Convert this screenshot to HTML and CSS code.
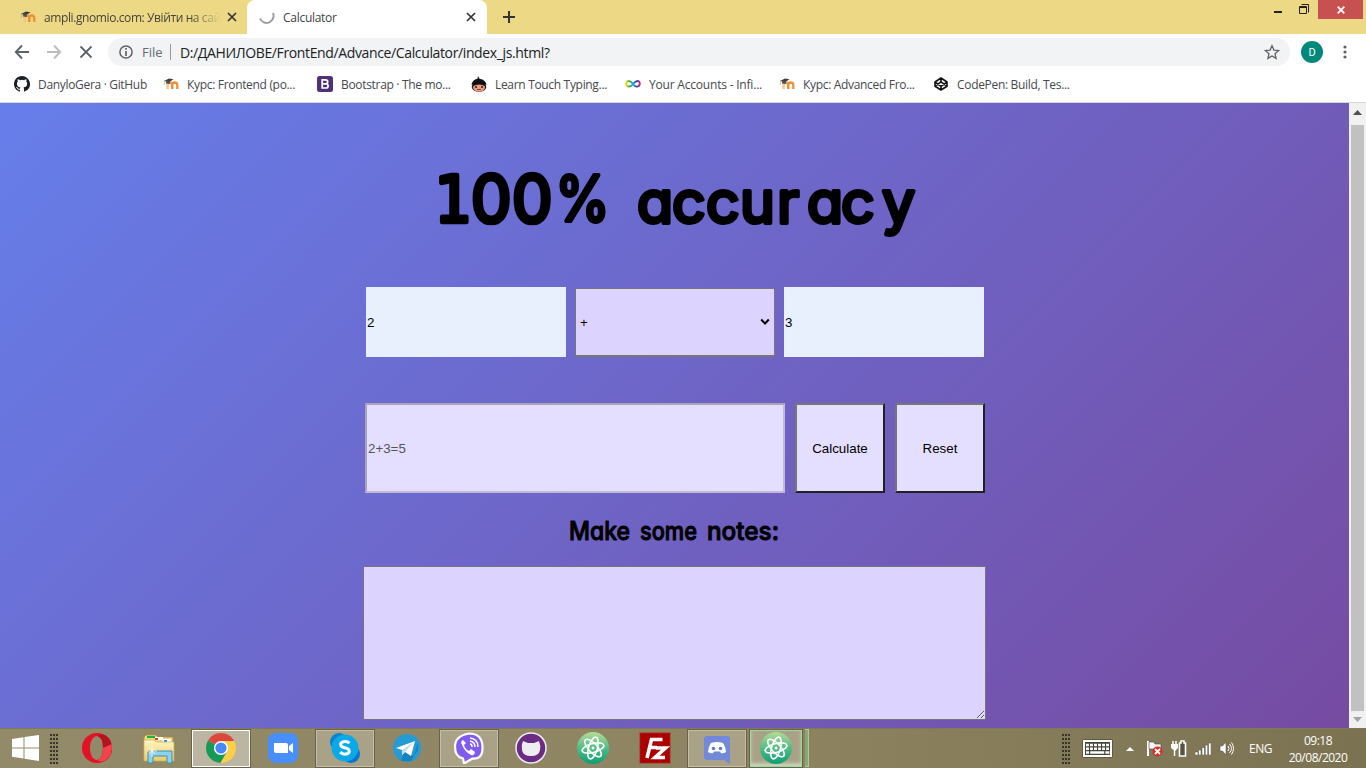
FILE: index.html
```html
<!DOCTYPE html>
<html lang="en">
<head>
<meta charset="utf-8">
<title>Calculator</title>
<link rel="stylesheet" href="styles.css">
</head>
<body>
<svg class="defs" width="0" height="0">
  <defs>
    <linearGradient id="atomg" x2="0" y2="1"><stop stop-color="#b5dc98"/><stop offset=".5" stop-color="#52bd83"/><stop offset="1" stop-color="#0c9e76"/></linearGradient>
    <linearGradient id="orangeg" x2="1" y2="0"><stop stop-color="#f9c28a"/><stop offset=".5" stop-color="#ed8b25"/><stop offset="1" stop-color="#f0913a"/></linearGradient>
    <linearGradient id="folder" x2="0" y2="1"><stop stop-color="#fff6c4"/><stop offset="1" stop-color="#e9cb69"/></linearGradient>
    <linearGradient id="rainbow" x2="1" y2="0"><stop stop-color="#e8d800"/><stop offset=".25" stop-color="#3aa650"/><stop offset=".5" stop-color="#15a9e0"/><stop offset=".75" stop-color="#244da0"/><stop offset="1" stop-color="#d0208a"/></linearGradient>
  </defs>
  <symbol id="moodle" viewBox="0 0 16 16">
    <path d="M4.500 13V9Q4.500 6.500 6.800 6.500T9.100 9V13M9.300 13V9Q9.300 6.500 11.800 6.500T14.300 9V13" fill="none" stroke="url(#orangeg)" stroke-width="2.300"/>
    <path d="M1 5 6 2.600l4.500.6L6 6.200z" fill="#3d3d3f"/><path d="M3 5.400v2.200l4 .4V5.200z" fill="#555"/><path d="M1.300 5v4" stroke="#bd9a71" stroke-width=".6"/>
  </symbol>
  <symbol id="atom" viewBox="0 0 32 32">
    <circle cx="16" cy="16" r="16" fill="url(#atomg)"/>
    <g fill="none" stroke="#fff" stroke-width="1.600"><ellipse cx="16" cy="16" rx="11.200" ry="4.400" transform="rotate(-15 16 16)"/><ellipse cx="16" cy="16" rx="11.200" ry="4.400" transform="rotate(47 16 16)"/><ellipse cx="16" cy="16" rx="11.200" ry="4.400" transform="rotate(106 16 16)"/></g>
    <circle cx="16" cy="16" r="1.500" fill="#fff"/>
  </symbol>
</svg>

<header class="tabs">
  <div class="tab tab-back"><svg class="i16" viewBox="0 0 16 16"><use href="#moodle"/></svg><span class="tab-text fade">ampli.gnomio.com: Увійти на сай</span><svg class="close" viewBox="0 0 10 10"><path d="m1 1 8 8M9 1 1 9"/></svg></div>
  <div class="tab tab-front"><svg class="i16" viewBox="0 0 16 16"><path d="M14 4A7 7 0 1 1 1 9.500" fill="none" stroke="#999" stroke-width="1.900"/></svg><span class="tab-text">Calculator</span><svg class="close" viewBox="0 0 10 10"><path d="m1 1 8 8M9 1 1 9"/></svg></div>
  <svg class="plus" viewBox="0 0 12 12"><path d="M6 0v12M0 6h12" stroke="#333" stroke-width="2"/></svg>
  <div class="window-buttons">
    <svg width="10" height="18" viewBox="0 0 10 18"><path d="M1 12h8" stroke="#222" stroke-width="2"/></svg>
    <svg width="12" height="18" viewBox="0 0 12 18"><path d="M1.500 6.500h7v7h-7zM1 7.500h8M3.500 4.500h7v8" fill="none" stroke="#222"/></svg>
    <div class="window-close"><svg width="8" height="8" viewBox="0 0 8 8"><path d="m.7.7 6.600 6.600M7.300.7.7 7.300" stroke="#fff" stroke-width="1.800"/></svg></div>
  </div>
</header>

<nav class="toolbar">
  <svg class="nav-icon" viewBox="0 0 16 16"><path d="M15 8H2M8 1.500 1.800 8 8 14.500" fill="none" stroke="#5f6368" stroke-width="1.900"/></svg>
  <svg class="nav-icon" viewBox="0 0 16 16"><path d="M1 8h13M8 1.500 14.200 8 8 14.500" fill="none" stroke="#bbbcbe" stroke-width="1.900"/></svg>
  <svg class="nav-icon" viewBox="0 0 16 16"><path d="m2.500 2.500 11 11M13.500 2.500l-11 11" stroke="#5f6368" stroke-width="1.800"/></svg>
  <div class="omnibox">
    <svg class="info" viewBox="0 0 14 14"><circle cx="7" cy="7" r="6.100" fill="none" stroke="#5f6368" stroke-width="1.500"/><path d="M7 3v1.700M7 6v5" stroke="#5f6368" stroke-width="1.700"/></svg>
    <span class="scheme">File</span><span class="url">D:/ДАНИЛОВЕ/FrontEnd/Advance/Calculator/index_js.html?</span>
    <svg class="star" viewBox="0 0 16 16"><path d="m8 1.700 1.900 4.400 4.800.4L11 9.700l1.100 4.700L8 11.900l-4.100 2.500L5 9.700 1.300 6.500l4.800-.4z" fill="none" stroke="#5f6368" stroke-width="1.300"/></svg>
  </div>
  <span class="avatar">D</span>
  <svg class="dots" viewBox="0 0 4 14"><g fill="#5f6368"><circle cx="2" cy="2" r="1.600"/><circle cx="2" cy="7" r="1.600"/><circle cx="2" cy="12" r="1.600"/></g></svg>
</nav>

<nav class="bookmarks">
  <a class="bm bm-first"><svg class="i16" viewBox="0 0 16 16"><path fill="#1b1f23" d="M8 0C3.580 0 0 3.580 0 8c0 3.540 2.290 6.530 5.470 7.590.4.070.55-.17.55-.38v-1.490c-2.010.37-2.530-.49-2.690-.94-.09-.23-.48-.94-.82-1.130-.28-.15-.68-.52-.01-.53.63-.01 1.080.58 1.230.82.72 1.210 1.870.87 2.330.66.070-.52.280-.87.510-1.070-1.780-.2-3.640-.89-3.640-3.950 0-.87.310-1.590.82-2.150-.08-.2-.36-1.020.080-2.120 0 0 .67-.21 2.200.82a7.600 7.600 0 0 1 4 0c1.530-1.040 2.200-.82 2.200-.82.44 1.100.16 1.920.080 2.120.51.56.82 1.270.82 2.150 0 3.070-1.870 3.750-3.650 3.950.29.25.54.73.54 1.480v2.200c0 .21.15.46.55.38A8 8 0 0 0 8 0z"/></svg><span>DanyloGera · GitHub</span></a>
  <a class="bm"><svg class="i16" viewBox="0 0 16 16"><use href="#moodle"/></svg><span>Курс: Frontend (po...</span></a>
  <a class="bm"><svg class="i16" viewBox="0 0 16 16"><rect width="16" height="16" rx="2.500" fill="#4f3177"/><path d="M5.200 3.900h3.300q2.200 0 2.200 1.900T8.500 7.800H5.200zM5.200 7.800h3.600q2.300 0 2.300 2.100T8.800 12H5.200z" fill="none" stroke="#fff" stroke-width="1.700"/></svg><span>Bootstrap · The mo...</span></a>
  <a class="bm"><svg class="i16" viewBox="0 0 16 16"><path d="M7 0 8.500 2.800Q15 4 15.500 9q-7-3-15 0Q1 4 6.500 2.800z" fill="#111"/><ellipse cx="8" cy="11" rx="7.300" ry="4.800" fill="#241b19"/><ellipse cx="8" cy="11.500" rx="6" ry="4.200" fill="#e99a80"/><path d="M2 10q6-3 12 0v-2Q8 4 2 8z" fill="#111"/><circle cx="5" cy="11" r="1" fill="#222"/><circle cx="11" cy="11" r="1" fill="#222"/><path d="M6 13.500h4" stroke="#86493b"/></svg><span>Learn Touch Typing...</span></a>
  <a class="bm"><svg class="i16" viewBox="0 0 16 16"><path d="M8 8C6 5 2 3.500 1.300 7.200.8 11 5 12 8 8s6.800-4 6.800-.4S10.500 12 8 8z" fill="none" stroke="url(#rainbow)" stroke-width="1.900"/></svg><span class="loose">Your Accounts - Infi...</span></a>
  <a class="bm"><svg class="i16" viewBox="0 0 16 16"><use href="#moodle"/></svg><span>Курс: Advanced Fro...</span></a>
  <a class="bm"><svg class="i16" viewBox="0 0 16 16"><path d="m8 2 6 4v4.200L8 14l-6-3.800V6zM8 2v3.800M8 10.300V14M2 6l6 4.300L14 6M2 10.200l6-4.400 6 4.400" fill="none" stroke="#111" stroke-width="1.600" stroke-linejoin="round"/></svg><span>CodePen: Build, Tes...</span></a>
</nav>

<div class="viewport">
  <main class="page">
    <h1 class="title"><svg width="500" height="100" viewBox="0 0 500 100">
      <text class="comic big" y="69" x="10 46 87"><tspan class="one">1</tspan>00</text>
      <text class="comic percent" x="130" y="67.500" textLength="55" lengthAdjust="spacingAndGlyphs">%</text>
      <text class="comic word" x="212 247 281 315 352 382 416 457" y="70">accuracy</text>
    </svg></h1>
    <form class="calculator">
      <div class="row operands">
        <input class="number" value="2">
        <div class="select"><span>+</span><svg width="10" height="8" viewBox="0 0 10 8"><path d="m1.200 1.500 3.800 4 3.800-4" fill="none" stroke="#000" stroke-width="2"/></svg></div>
        <input class="number" value="3">
      </div>
      <div class="row result-row">
        <input class="result" value="2+3=5" disabled>
        <button class="action" type="button">Calculate</button>
        <button class="action" type="button">Reset</button>
      </div>
    </form>
    <h2 class="notes-title"><svg width="230" height="44" viewBox="0 0 230 44"><text class="comic note" y="28"><tspan x="10" textLength="61" lengthAdjust="spacingAndGlyphs">Make</tspan><tspan x="81" textLength="57" lengthAdjust="spacingAndGlyphs">some</tspan><tspan x="148" textLength="72" lengthAdjust="spacingAndGlyphs">notes:</tspan></text></svg></h2>
    <textarea class="notes"></textarea>
  </main>
  <aside class="scrollbar"><svg width="9" height="5" viewBox="0 0 9 5"><path d="M4.500 0 9 5H0z" fill="#505050"/></svg><div class="thumb"></div><svg width="9" height="5" viewBox="0 0 9 5"><path d="M0 0h9L4.500 5z" fill="#a3a3a3"/></svg></aside>
</div>

<footer class="taskbar">
  <div class="start"><svg width="28" height="28" viewBox="0 0 28 28"><path d="M0 5 11.500 3.300v10.200H0zM12.500 3.100 27 1v12.500H12.500zM0 14.500h11.500v10L0 22.800zM12.500 14.500H27V27l-14.500-2.200z" fill="#fff"/></svg></div>
  <i class="grip"></i>
  <div class="apps">
    <div class="app"><svg viewBox="0 0 32 32"><path fill-rule="evenodd" fill="#e31226" d="M16 1C7 1 1 8 1 16s6 15 15 15 15-7 15-15S25 1 16 1zm0 3c4 0 6 5 6 12s-2 12-6 12-7-5-7-12 3-12 7-12z"/><path d="M16 4q5-3 9-.2 6 4 6 12.200t-6 12.200Q21 31 16 28q6-1 6-12T16 4" fill="#b71120"/><path d="M22 16 30.800 12Q32 23 25 28q-5 3-9 0 6-1 6-12" fill="#f4434a"/></svg></div>
    <div class="app"><svg viewBox="0 0 32 32"><path d="M3 3h10l2 2h15v22H1V5z" fill="#f0d984" stroke="#a98e46"/><path d="M4 4h8v2H4z" fill="#17b839"/><path d="M12 5h8v3h-8z" fill="#fff"/><path d="M12 6h3v2h-3z" fill="#de4430"/><path d="M20 7h8v3h-8z" fill="#fff"/><path d="M21 8h3v2h-3z" fill="#1592e3"/><path d="M1 8h10l2 2h18v19H1z" fill="url(#folder)" stroke="#cfaf55" stroke-width=".7"/><path d="M5 31V19h24v12h-5v-7H10v7z" fill="#8dd2ed" stroke="#438faf"/><path d="M9 14v11M4 19h10M6 16l6 6M12 16l-6 6" stroke="#fffce1" stroke-width=".8"/></svg></div>
    <div class="app active"><svg viewBox="0 0 32 32"><path d="M16 16 3 8.500A15 15 0 0 1 29 8.500z" fill="#dc483b"/><path d="M16 16 3 8.500A15 15 0 0 0 15.500 31L22 19z" fill="#159b55"/><path d="M16 9h13.300A15 15 0 0 1 15.500 31L22.500 19.500z" fill="#fdcf45"/><circle cx="16" cy="16" r="7.100" fill="#fff"/><circle cx="16" cy="16" r="5.600" fill="#4688f4"/></svg></div>
    <div class="app"><svg viewBox="0 0 32 32"><rect x="1" y="1" width="30" height="30" rx="8" fill="#4790fb"/><path d="M7 11h12q2 0 2 2v8H9q-2 0-2-2zM22 14l4-3v10l-4-3z" fill="#fff"/></svg></div>
    <div class="app open"><svg viewBox="0 0 32 32"><circle cx="10" cy="10" r="9" fill="#0784ca"/><circle cx="22" cy="22" r="9" fill="#0875cf"/><circle cx="16" cy="16" r="13.500" fill="#0ca9e9"/><path d="M20.500 11.200Q18 9 14.500 9.800T11.800 13q.2 2 4.200 2.800t4.300 3.300q-.3 2.700-3.600 3t-5.500-2" fill="none" stroke="#fff" stroke-width="3"/></svg></div>
    <div class="app"><svg viewBox="0 0 32 32"><circle cx="16" cy="16" r="14" fill="#259bd6"/><path d="m13 20 10 4 4-14v8L20 29H10z" fill="#1881bd"/><path d="m5 16 19-7-4 15-6-4-3 3v-5z" fill="#fff"/><path d="m11 18 12-8-9 10-3 3z" fill="#c8dae8"/></svg></div>
    <div class="app open"><svg viewBox="0 0 32 32"><path d="M16 1.500q13 0 13.500 13t-10 12L11 31.500l-1-5Q2 25 2 14.500T16 1.500z" fill="#805bee" stroke="#fff" stroke-width="2.200"/><path d="M10 8q-3 1-1 5 3 7 9 10 3 1 4-3l-4-3-2 2q-4-2-5-6l2-2z" fill="#fff"/><path d="M17 6q8 1 8 9M17 9q5 1 5 6M17 12q2 0 2 3" fill="none" stroke="#fff" stroke-width="1.500"/></svg></div>
    <div class="app"><svg viewBox="0 0 32 32"><circle cx="16" cy="16" r="15" fill="#6b2c86" stroke="#eee" stroke-width="1.500"/><path d="m8 9 5 2h6l5-2q2 5 1 9-1 6-9 6t-9-6Q6 13 8 9z" fill="#eee"/></svg></div>
    <div class="app"><svg viewBox="0 0 32 32"><use href="#atom"/></svg></div>
    <div class="app"><svg viewBox="0 0 32 32"><rect x=".8" y=".8" width="30.400" height="30.400" fill="#ad0000" stroke="#a04b43" stroke-dasharray="2 1"/><path d="M8 26 12.500 7.500h11M10 15.500h8M17 16h9.500L16 25.500h10" fill="none" stroke="#fff" stroke-width="3.600"/></svg></div>
    <div class="app open"><svg viewBox="0 0 32 32"><path d="M6 4h20q3 0 3 3v25l-6-4H6q-3 0-3-3V7q0-3 3-3z" fill="#7289da"/><path d="M10 11q6-2 12 0 3 4 3 9-3 2-5 1l-1-1.500h-6l-1 1.500q-2 1-5-1 0-5 3-9z" fill="#fff"/><circle cx="12.500" cy="16.500" r="1.800" fill="#667dce"/><circle cx="19.500" cy="16.500" r="1.800" fill="#667dce"/></svg></div>
    <div class="app atom-open"><svg viewBox="0 0 32 32"><use href="#atom"/></svg></div><i class="stack"></i>
  </div>
  <i class="grip grip-right"></i>
  <div class="tray">
    <svg class="keyboard" viewBox="0 0 31 19"><rect x=".5" y=".5" width="30" height="18" rx="1" fill="#37382b"/><rect x="2" y="2" width="27" height="15" fill="#45463a" stroke="#fff" stroke-width="2"/><path d="M4 6h23M4 9.700h23" stroke="#fff" stroke-width="2.600" stroke-dasharray="2.900 1.120"/><path d="M4 13.500h3m1.200 0h14m1.200 0h4" stroke="#fff" stroke-width="2.300"/></svg>
    <svg class="arrow" viewBox="0 0 8 4"><path d="m4 0 4 4H0z" fill="#fff"/></svg>
    <svg class="flag" viewBox="0 0 17 17"><path d="M2 1v15" stroke="#fff" stroke-width="2"/><path d="M3 2h5l1 2h6v7H9L8 9H3z" fill="#f5f5f5" stroke="#444538" stroke-width=".6"/><circle cx="11.500" cy="11.500" r="5" fill="#d92c27"/><path d="m9 9 5 5m0-5-5 5" stroke="#fff" stroke-width="1.800"/></svg>
    <svg class="battery" viewBox="0 0 16 17"><path d="M2 1v4m3-4v4M3.500 9v7" stroke="#fff" stroke-width="1.500"/><path d="M0 4h7v4L4 11 0 8z" fill="#fff"/><path d="M8.500 3H10V1h3v2h1.500v13h-6z" fill="#535340" stroke="#fff" stroke-width="1.600"/></svg>
    <svg class="signal" viewBox="0 0 16 13"><path d="M0 10h3v3H0zm3.500-2h2.500v5H3.500zM7 5.500h2.500V13H7zM10.300 3h2.400v10h-2.400zM13.500 1H16v12h-2.500z" fill="#fff" stroke="#4c4d40" stroke-width=".5"/></svg>
    <svg class="speaker" viewBox="0 0 15 15"><path d="M1 5h2.500L7 1v13L3.500 10H1z" fill="#fff" stroke="#444" stroke-width=".5"/><path d="M9 5q2 2.500 0 5M10.500 3q4 4.500 0 9M12.500 1.500q4 6 0 12" fill="none" stroke="#fff"/></svg>
    <span class="lang">ENG</span>
    <div class="clock"><span>09:18</span><span>20/08/2020</span></div>
  </div>
</footer>
</body>
</html>
```
FILE: styles.css
```css
* { box-sizing: border-box; }
body { margin: 0; width: 1366px; height: 768px; overflow: hidden; display: flex; flex-direction: column; font-family: "Open Sans", "Noto Sans", sans-serif; font-size: 12px; }
svg { display: block; flex: none; }
.defs { position: absolute; }
.i16 { width: 16px; height: 16px; }
.tabs { height: 34px; background: #ecd885; display: flex; }
.tab { display: flex; align-items: center; color: #45443b; }
.tab-back { width: 247px; padding: 0 10px 0 20px; }
.tab-front { width: 240px; padding: 0 11px 0 12px; background: #fff; border-radius: 8px 8px 0 0; color: #404347; }
.tab-text { margin-left: 8px; flex: 1; white-space: nowrap; font-size: 12px; letter-spacing: -.28px; }
.fade { margin-right: 4px; letter-spacing: -.4px; mask-image: linear-gradient(90deg, #000 82%, transparent); }
.close { width: 10px; height: 10px; stroke: #333; stroke-width: 1.7; margin-left: 2px; }
.tab-back .close { margin-right: 2px; }
.plus { width: 12px; height: 12px; margin: 11px 0 0 16px; }
.window-buttons { display: flex; margin-left: auto; padding-right: 3px; }
.window-buttons > svg:first-child { margin-right: 15px; }
.window-close { width: 45px; height: 19px; margin-left: 8px; background: #c75050; display: grid; place-items: center; }
.toolbar { height: 36px; background: #fff; display: flex; align-items: center; padding-left: 14px; }
.nav-icon { width: 16px; height: 16px; margin-right: 16px; }
.nav-icon:nth-child(3) { margin-right: 14px; }
.omnibox { width: 1182px; height: 28px; border-radius: 14px; background: #f1f3f4; display: flex; align-items: center; padding: 0 10px 0 11px; }
.info { width: 14px; height: 14px; margin-right: 9px; }
.scheme { font-size: 13px; color: #666b70; border-right: 1px solid #95989c; line-height: 16px; margin-right: 9px; width: 29px; }
.url { color: #202124; font-size: 14px; letter-spacing: -.37px; white-space: nowrap; }
.star { width: 16px; height: 16px; margin-left: auto; }
.avatar { width: 22px; height: 22px; margin-left: 11px; border-radius: 50%; background: #00897b; color: #fff; display: grid; place-items: center; font: 11px Roboto, sans-serif; }
.dots { width: 4px; height: 14px; margin-left: 20px; }
.bookmarks { height: 33px; border-bottom: 1px solid #d6d6dd; background: #fff; display: flex; padding: 6px 0 0 14px; }
.bm { width: 154px; height: 16px; display: flex; align-items: center; gap: 8px; color: #45484d; white-space: nowrap; font-size: 12px; letter-spacing: -.32px; }
.bm-first { width: 149px; }
.loose { letter-spacing: -.2px; }
.viewport { height: 625px; display: flex; }
.page { width: 1349px; height: 625px; overflow: hidden; background: linear-gradient(135deg, #667eea 0%, #764ba2 100%); display: flex; flex-direction: column; padding-left: 364px; }
.title { margin: 50px 0 0 61px; height: 134px; }
.comic { font-family: "Comic Sans MS", Inter, sans-serif; font-weight: 400; font-feature-settings: "cv11" 1; stroke: #000; stroke-linejoin: round; stroke-linecap: round; }
.big { font-size: 64px; stroke-width: 4.5px; }
.percent { font-size: 63px; stroke-width: 4px; }
.one { font-family: "Comic Sans MS", "DejaVu Sans Condensed", "DejaVu Sans", sans-serif; font-stretch: condensed; }
.word { font-size: 59px; stroke-width: 4px; }
.note { font-size: 25.5px; font-weight: 500; stroke-width: 1px; }
.row { display: flex; }
input, button { font: 13.333px "Liberation Sans", Arial, sans-serif; }
.operands { margin-left: 2px; gap: 9px; }
.number { width: 200px; height: 70px; border: 0; border-radius: 0; background: #e8f0fe; padding: 1px; color: #000; }
.select { width: 200px; height: 69px; margin-top: 1px; border: 1px solid #767676; border-bottom-width: 2px; background: #dcd3ff; padding: 0 4px; display: flex; align-items: center; justify-content: space-between; font: 13.333px "Liberation Sans", Arial, sans-serif; }
.result-row { margin: 46px 0 0 1px; gap: 10px; }
.result { width: 420px; height: 90px; border: 2px solid; border-color: #aaa3ba #c2b9d8 #c2b9d8 #aaa3ba; background: #e5dfff; padding: 1px; color: #545454; }
.action { width: 90px; height: 90px; padding: 0; border: 2px solid; border-color: #767676 #212121 #212121 #767676; border-radius: 0; background: #e5dfff; color: #000; }
.notes-title { margin: 19px 0 0 195px; height: 54px; }
.notes { width: 623px; height: 154px; margin-left: -1px; border: 1px solid #767676; background: #dcd3ff; outline: 0; }
.scrollbar { width: 17px; background: #f1f1f1; display: flex; flex-direction: column; align-items: center; padding: 7px 0 6px; }
.thumb { width: 13px; height: 586px; margin: 10px 0 6px; background: #c1c1c1; }
.taskbar { height: 40px; display: flex; align-items: center; background: linear-gradient(90deg, #938a69, #8e8462 55%, #7b7251); border-top: 1px solid #817858; color: #fff; }
.start { margin: -2px 0 0 12px; width: 38px; }
.grip { width: 8px; height: 31px; background: repeating-linear-gradient(0deg, transparent 0 2px, #8e8565 2px 4px), repeating-linear-gradient(90deg, #393629 0 2px, #8e8565 2px 3px); }
.apps { margin-left: 9px; display: flex; gap: 2px; height: 39px; }
.app { width: 60px; height: 39px; padding-bottom: 1px; display: grid; place-items: center; }
.app > svg { width: 32px; height: 32px; }
.active, .open, .atom-open { border: 1px solid #68614b; box-shadow: inset 0 0 0 1px #c5bea6; background: #aaa286; }
.active { background: #bbb5a1; box-shadow: inset 0 0 0 1px #fff; }
.atom-open { width: 54px; box-shadow: inset 0 0 0 1px #9ad7a5, inset 0 -3px 4px #d2e6c3; }
.stack { width: 4px; height: 38px; background: #87a77b; border: 1px solid #a2cf9b; border-left: 0; }
.grip-right { margin-left: auto; background: repeating-linear-gradient(0deg, transparent 0 2px, #817857 2px 4px), repeating-linear-gradient(90deg, #393629 0 2px, #817857 2px 3px); }
.tray { width: 296px; padding-left: 12px; display: flex; align-items: center; }
.keyboard { width: 31px; height: 19px; }
.arrow { width: 8px; height: 4px; margin-left: 13px; }
.flag { width: 17px; height: 17px; margin-left: 12px; }
.battery { width: 16px; height: 17px; margin-left: 8px; }
.signal { width: 16px; height: 13px; margin-left: 8px; }
.speaker { width: 15px; height: 15px; margin-left: 8px; }
.lang { margin-left: 15px; width: 24px; font-size: 12px; letter-spacing: -.5px; }
.clock { margin-left: 14px; width: 62px; display: flex; flex-direction: column; align-items: center; line-height: 17px; font-size: 12px; letter-spacing: -.5px; }
```
